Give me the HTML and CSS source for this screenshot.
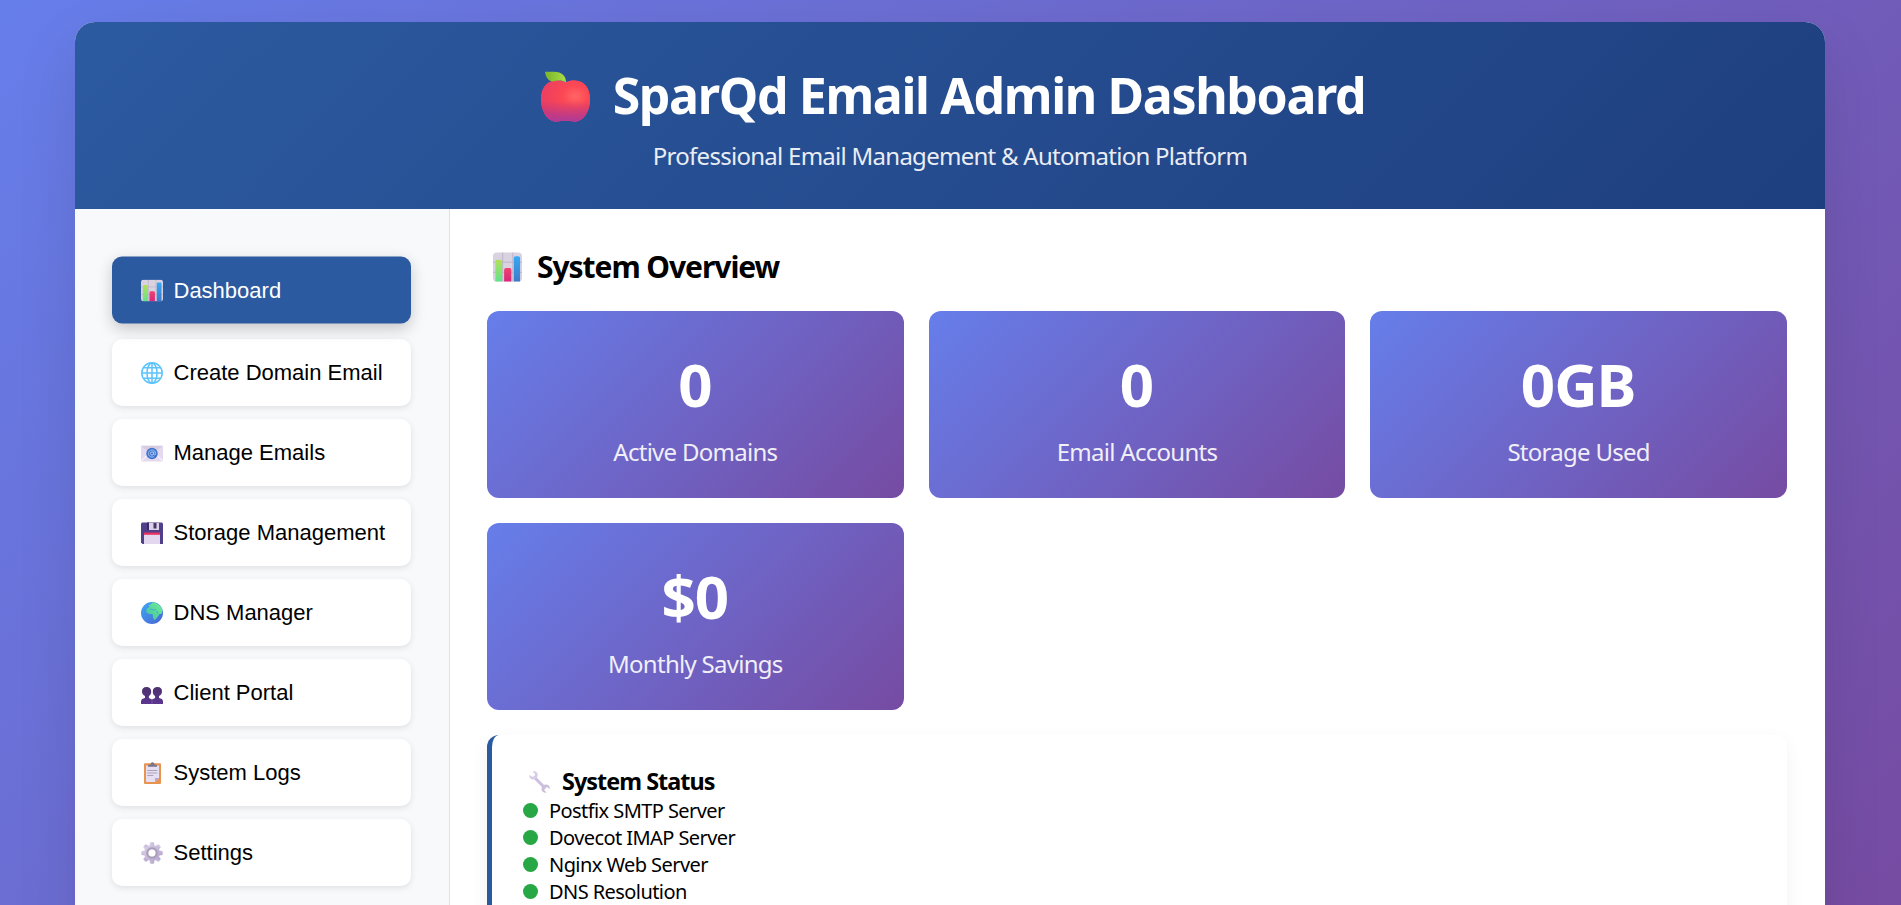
FILE: index.html
```html
<!DOCTYPE html>
<html lang="en">
<head>
<meta charset="utf-8">
<title>SparQd Email Admin Dashboard</title>
<link rel="stylesheet" href="styles.css">
</head>
<body>
<svg class="defs" width="0" height="0" aria-hidden="true">
  <defs>
    <radialGradient id="gApple" cx=".7" cy=".38" r=".75"><stop offset="0" stop-color="#ff6565"/><stop offset=".35" stop-color="#fc4854"/><stop offset="1" stop-color="#e93d63"/></radialGradient>
    <linearGradient id="gAppleLow" x1="0" y1="0" x2="0" y2="1"><stop offset=".5" stop-color="#b0338a" stop-opacity="0"/><stop offset="1" stop-color="#ae3a9a"/></linearGradient>
    <linearGradient id="gLeaf" x1="0" y1="0" x2="1" y2="0"><stop offset="0" stop-color="#78b32a"/><stop offset="1" stop-color="#a9df45"/></linearGradient>
    <linearGradient id="gGreen" x1="0" y1="0" x2="0" y2="1"><stop offset="0" stop-color="#b2e058"/><stop offset="1" stop-color="#62e28c"/></linearGradient>
    <linearGradient id="gRed" x1="0" y1="0" x2="0" y2="1"><stop offset="0" stop-color="#f04370"/><stop offset="1" stop-color="#d9277c"/></linearGradient>
    <linearGradient id="gBlue" x1="0" y1="0" x2="0" y2="1"><stop offset="0" stop-color="#35aaf8"/><stop offset="1" stop-color="#3e7ac9"/></linearGradient>
    <linearGradient id="gEarth" x1="0" y1="0" x2="1" y2="1"><stop offset="0" stop-color="#3fa8f5"/><stop offset="1" stop-color="#4a62d4"/></linearGradient>
    <linearGradient id="gLand" x1="1" y1="0" x2="0" y2="1"><stop offset="0" stop-color="#71f098"/><stop offset="1" stop-color="#41bfa0"/></linearGradient>
    <linearGradient id="gGear" x1="0" y1="0" x2="1" y2="1"><stop offset="0" stop-color="#d8d0e6"/><stop offset="1" stop-color="#b5a4cd"/></linearGradient>
    <linearGradient id="gPeople" x1="0" y1="0" x2="0" y2="1"><stop offset="0" stop-color="#4c316d"/><stop offset="1" stop-color="#5c3690"/></linearGradient>
    <symbol id="chart" viewBox="0 0 30 30">
      <rect width="30" height="30" rx="4" fill="#d9d2e1"/>
      <path d="M10 0V30M20.500 0V30M0 10H30M0 20.500H30" stroke="#bdb3c8" stroke-width="1"/>
      <path d="M2.500 30V9.500a2 2 0 0 1 2-2h3a2 2 0 0 1 2 2V30z" fill="url(#gGreen)"/>
      <path d="M11.500 30V18a2 2 0 0 1 2-2h3.500a2 2 0 0 1 2 2V30z" fill="url(#gRed)"/>
      <path d="M21.500 30V6a2 2 0 0 1 2-2h2.500a2 2 0 0 1 2 2V30z" fill="url(#gBlue)"/>
    </symbol>
  </defs>
</svg>
<div class="container">
  <header class="header">
    <h1 class="title">
      <svg class="title-icon" viewBox="0 0 49 51"><path id="apple" d="M24.500 11.500C20 9.500 18 9.500 15.500 9.500 5 9.500 0 18 0 28c0 13 7 22.500 15 22.500 4 0 6-1 9.500-1s5.500 1 9.500 1c8 0 15-9.500 15-22.500 0-10-5-18.500-15.500-18.500-2.500 0-4.500 0-9 2z" fill="url(#gApple)"/><use href="#apple" fill="url(#gAppleLow)"/><path d="M24.500 11.500C20 9.500 18 9.500 15.500 9.500 5 9.500 0 18 0 28c0 13 7 22.500 15 22.500 4 0 6-1 9.500-1s5.500 1 9.500 1c8 0 15-9.500 15-22.500 0-10-5-18.500-15.500-18.500-2.500 0-4.500 0-9 2z" fill="url(#gAppleLow)"/><path d="M4 .7h9C21 .7 25 5 25 11.500 20 8.500 17 9.500 11 10.500 7 9 4.500 6 4 .7z" fill="url(#gLeaf)"/></svg>
      <span class="title-text">SparQd Email Admin Dashboard</span>
    </h1>
    <p class="subtitle">Professional Email Management &amp; Automation Platform</p>
  </header>
  <div class="layout">
    <nav class="sidebar">
      <button class="nav-btn active"><svg class="nav-icon"><use href="#chart"/></svg>Dashboard</button>
      <button class="nav-btn"><svg class="nav-icon" viewBox="0 0 22 22"><circle cx="11" cy="11" r="10.300" fill="#fff"/><g fill="none" stroke="#5cc4fb" stroke-width="1.500"><circle cx="11" cy="11" r="10.200"/><ellipse cx="11" cy="11" rx="5" ry="10"/><path d="M11 1v20M1 11h20M2.500 5.800h17M2.500 16.200h17"/></g></svg>Create Domain Email</button>
      <button class="nav-btn"><svg class="nav-icon" viewBox="0 0 22 22"><rect y="3.500" width="22" height="16" rx="1" fill="#e5d9f0"/><path d="M0 4l11 8L22 4z" fill="#d5cce0"/><path d="M0 19l8-7M22 19l-8-7" stroke="#f6eefb" stroke-width="1.500"/><circle cx="11" cy="11.500" r="5.700" fill="#3d73cd"/><circle cx="11" cy="11.500" r="1.600" fill="none" stroke="#b6cff5"/><path d="M12.800 9.500v2.500c0 1.500 1.900 1.400 1.900-.6 0-2-1.700-3.400-3.700-3.400-4.600 0-5 7 0 7 1 0 1.500-.2 2-.5" fill="none" stroke="#b6cff5" stroke-width=".8"/></svg>Manage Emails</button>
      <button class="nav-btn"><svg class="nav-icon" viewBox="0 0 22 22"><path d="M1 .5h20l1 1V22H1.500L0 20.500V1.500z" fill="#50408a"/><path d="M6 .5h12V8H6z" fill="#3b2966"/><path d="M8 .5h10V8H8z" fill="#dcd1e8"/><path d="M12.500 1h3v5.500h-3z" fill="#493668"/><path d="M3 11h16v11H3z" fill="#e2d7ef"/><path d="M3 10.500h16v2.300H3z" fill="#e83160"/></svg>Storage Management</button>
      <button class="nav-btn"><svg class="nav-icon" viewBox="0 0 22 22"><circle cx="11" cy="11" r="11" fill="url(#gEarth)"/><path d="M7.500 3.200L10 2l2-1.800c4.500.6 8.400 4 9.600 8.300L20.500 12l-2 0-2 3-2.800 3.200-1.700-2.200-.5-4-3.500 0-3-2L6 6.500 8.500 5z" fill="url(#gLand)"/><path d="M9 7l2 .5 2 .7 2-1M15.500 9l1.700 3" stroke="#39a5d6" stroke-width=".8" fill="none"/></svg>DNS Manager</button>
      <button class="nav-btn"><svg class="nav-icon" viewBox="0 0 22 22"><path d="M0 22v-2.500c0-2.500 2-3 4-3.500V14C2.200 13 1 11.500 1 9.500 1 6.500 2.500 5 5.500 5s4.700 1.500 4.700 4.500c0 2-.7 3.500-2.300 4.500v2l3.100 1.500 3.100-1.500v-2c-1.600-1-2.300-2.500-2.300-4.500C11.800 6.500 13.500 5 16.500 5S21 6.500 21 9.500c0 2-1.200 3.500-3 4.500v2c2 .5 4 1 4 3.500V22z" fill="url(#gPeople)"/><path d="M11 17.500V22" stroke="#8b61b8" stroke-width=".6"/></svg>Client Portal</button>
      <button class="nav-btn"><svg class="nav-icon" viewBox="0 0 22 22"><rect x="3" y="1.200" width="17" height="20.800" rx="1" fill="#e89451"/><path d="M5 3.500h13V16l-4 4H5z" fill="#e6def1"/><path d="M18 16l-4 4v-4z" fill="#b7a5cb"/><path d="M7 4.800V2.700h2.500C9.700-.5 13.300-.5 13.500 2.700H16v2.100z" fill="#79748a"/><path d="M6.300 8.500h10M6.300 11h10M6.300 13.500h6" stroke="#aaa2bb" stroke-width="1.100"/></svg>System Logs</button>
      <button class="nav-btn"><svg class="nav-icon" viewBox="0 0 22 22"><g fill="url(#gGear)"><rect x="8.800" y=".3" width="4.400" height="21.400" rx="1.300"/><rect x=".3" y="8.800" width="21.400" height="4.400" rx="1.300"/><rect x="8.800" y=".3" width="4.400" height="21.400" rx="1.300" transform="rotate(45 11 11)"/><rect x="8.800" y=".3" width="4.400" height="21.400" rx="1.300" transform="rotate(-45 11 11)"/><circle cx="11" cy="11" r="8"/></g><circle cx="11" cy="11" r="4.700" fill="none" stroke="#a79db6" stroke-width="2"/><circle cx="11" cy="11" r="3.500" fill="#fff"/></svg>Settings</button>
    </nav>
    <main class="main">
      <h2 class="section-title"><svg class="section-icon"><use href="#chart"/></svg><span>System Overview</span></h2>
      <section class="stats">
        <div class="stat"><div class="stat-value">0</div><div class="stat-label">Active Domains</div></div>
        <div class="stat"><div class="stat-value">0</div><div class="stat-label">Email Accounts</div></div>
        <div class="stat"><div class="stat-value">0GB</div><div class="stat-label">Storage Used</div></div>
        <div class="stat"><div class="stat-value">$0</div><div class="stat-label">Monthly Savings</div></div>
      </section>
      <section class="card">
        <h3 class="card-title"><svg class="card-icon" viewBox="0 0 21 22"><path d="M5 6L16.500 17.500" stroke="#cdbfe0" stroke-width="3"/><path d="M3.500.6L6 3 5.500 5.300 3.200 5.800.4 3.900C-.3 8 3.500 9.500 6.500 7.800L8.500 5.500C9.500 2.200 7-.6 3.500.6z" fill="#d7cde5"/><path d="M17.500 21.400L15.200 19l.5-2.400 2.300-.5 2.700 1.900c.7-4-3.100-5.600-6-4l-2 2.400c-1 3.200 1.400 6.200 4.800 5z" fill="#cbc0da"/></svg><span>System Status</span></h3>
        <ul class="status-list">
          <li class="status"><span class="dot"></span>Postfix SMTP Server</li>
          <li class="status"><span class="dot"></span>Dovecot IMAP Server</li>
          <li class="status"><span class="dot"></span>Nginx Web Server</li>
          <li class="status"><span class="dot"></span>DNS Resolution</li>
        </ul>
      </section>
    </main>
  </div>
</div>
</body>
</html>
```
FILE: styles.css
```css
* { box-sizing: border-box; margin: 0; padding: 0; }
html { overflow: hidden; }
body {
  height: 905px;
  overflow: hidden;
  padding: 22px 76px 0 75px;
  background: linear-gradient(135deg, #667eea 0%, #764ba2 100%);
  font-family: "Noto Sans", "Open Sans", sans-serif;
  font-size: 20px;
  color: #000;
}
.defs { position: absolute; }
.container {
  height: 1100px;
  background: #fff;
  border-radius: 20px;
  overflow: hidden;
  box-shadow: 0 25px 62px rgba(0, 0, 0, .1);
}
.header {
  height: 187px;
  padding-top: 40px;
  background: linear-gradient(135deg, #2c5aa0 0%, #1e3f7f 100%);
  color: #fff;
  display: flex;
  flex-direction: column;
  align-items: center;
}
.title {
  display: flex;
  align-items: center;
  gap: 23px;
  font-size: 50px;
  line-height: 67px;
  letter-spacing: -1.35px;
  margin-left: 6px;
  white-space: nowrap;
}
.title-icon { width: 49px; height: 51px; margin-top: 1px; }
.subtitle {
  margin-top: 11px;
  font-size: 24px;
  line-height: 32px;
  letter-spacing: -.73px;
  opacity: .9;
}
.layout { display: grid; grid-template-columns: 375px 1fr; height: 913px; }
.sidebar {
  background: #f8f9fb;
  border-right: 1px solid #dee2e6;
  padding: 50px 37px;
  display: flex;
  flex-direction: column;
  gap: 13px;
}
.nav-btn {
  display: flex;
  align-items: center;
  width: 299px;
  height: 67px;
  flex: none;
  padding: 1px 0 0 29px;
  border: 0;
  border-radius: 10px;
  background: #fff;
  color: #000;
  box-shadow: 0 2px 6px rgba(0, 0, 0, .1);
  font: 22px "Liberation Sans", Arial, sans-serif;
  white-space: nowrap;
}
.nav-icon { width: 22px; height: 22px; margin-right: 10.5px; flex: none; }
.nav-btn.active {
  background: #2c5aa0;
  color: #fff;
  transform: translateY(-2.5px);
  box-shadow: 0 5px 15px rgba(0, 0, 0, .2);
}
.main { padding: 37px 38px 0 37px; }
.section-title {
  display: flex;
  align-items: center;
  gap: 15px;
  margin: 1px 0 24px 6px;
  font-size: 30px;
  line-height: 40px;
  letter-spacing: -1.05px;
}
.section-icon { width: 29px; height: 30px; }
.stats { display: grid; grid-template-columns: repeat(3, 1fr); gap: 25px; }
.stat {
  height: 187px;
  padding-top: 33px;
  border-radius: 12px;
  background: linear-gradient(135deg, #667eea 0%, #764ba2 100%);
  color: #fff;
  text-align: center;
}
.stat-value { font-size: 60px; font-weight: 700; line-height: 80px; letter-spacing: -1px; text-indent: -1px; }
.stat-label { margin-top: 12px; font-size: 24px; line-height: 32px; letter-spacing: -.72px; opacity: .9; }
.card {
  margin-top: 25px;
  height: 260px;
  padding: 31px;
  border-left: 5px solid #2c5aa0;
  border-radius: 12px;
  background: #fff;
  box-shadow: 0 6px 19px rgba(0, 0, 0, .05);
}
.card-title {
  display: flex;
  align-items: center;
  gap: 12px;
  margin-left: 6px;
  font-size: 23.4px;
  line-height: 31px;
  letter-spacing: -.98px;
}
.card-icon { width: 21px; height: 22px; }
.status-list { list-style: none; }
.status { display: flex; align-items: center; line-height: 27px; letter-spacing: -.57px; }
.dot { width: 15px; height: 15px; margin-right: 11px; border-radius: 50%; background: #28a745; }
```
